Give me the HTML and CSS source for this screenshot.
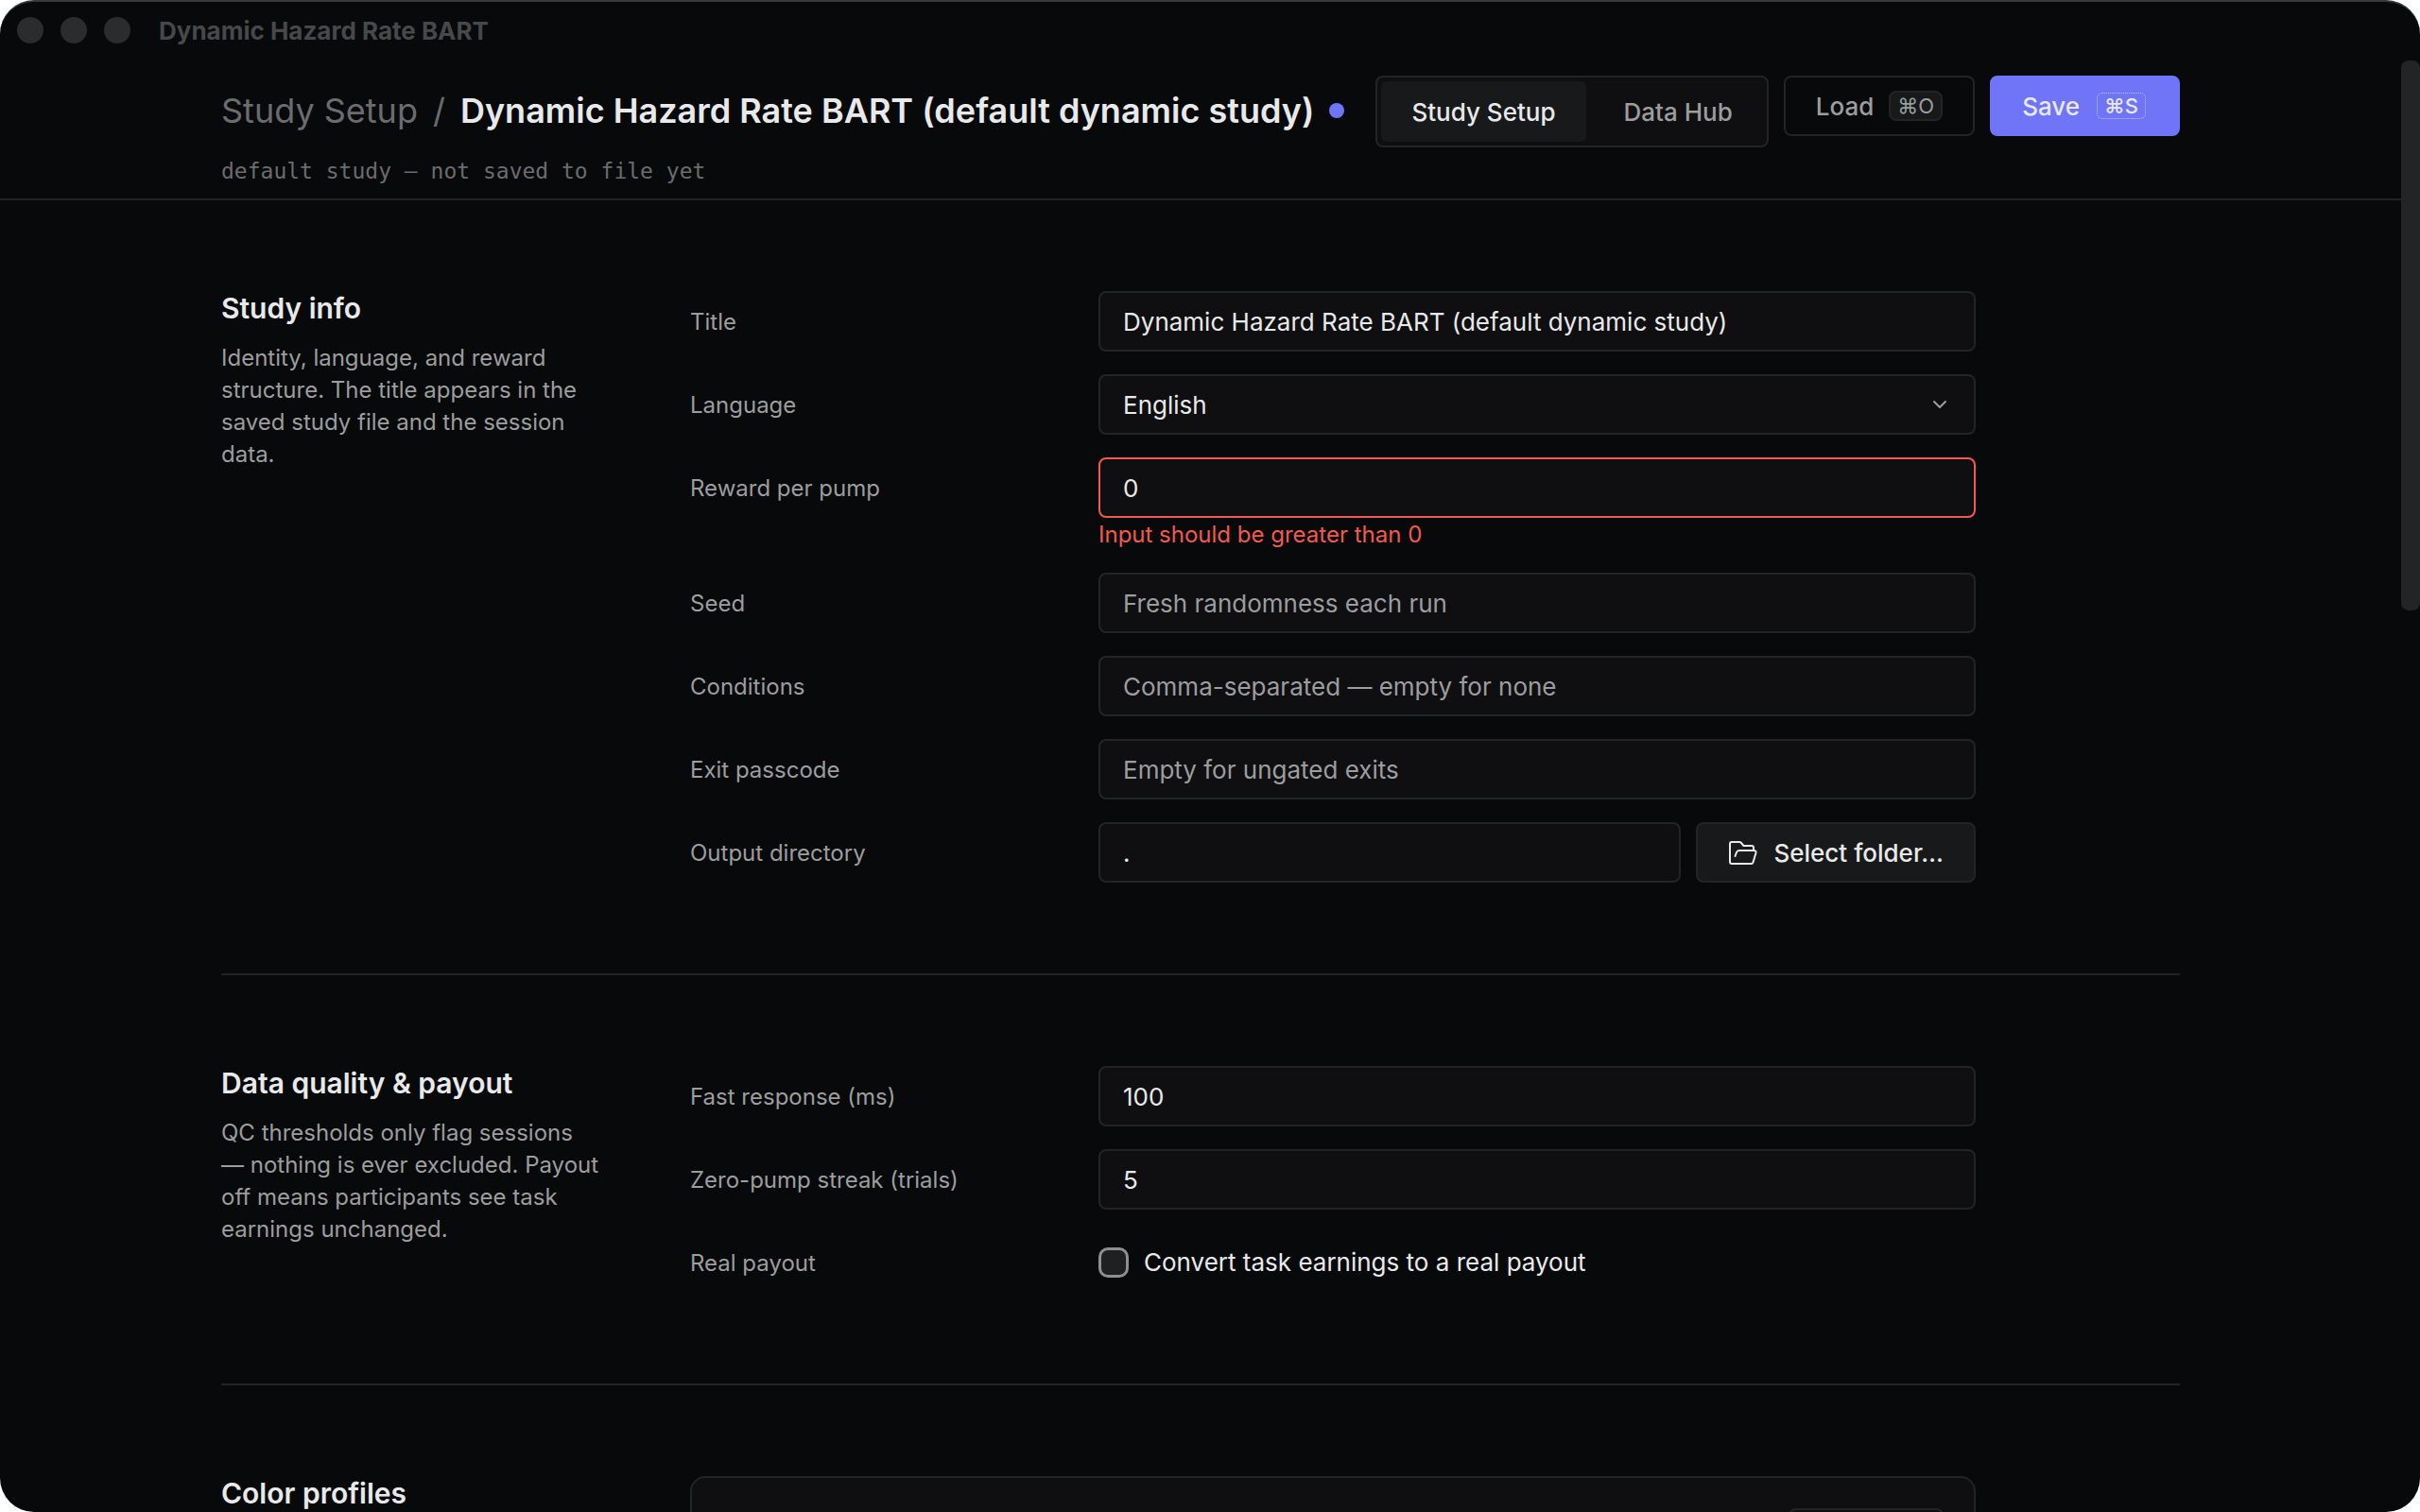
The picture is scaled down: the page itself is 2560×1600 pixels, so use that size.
FILE: index.html
```html
<!DOCTYPE html>
<html lang="en">
<head>
  <meta charset="UTF-8">
  <meta name="viewport" content="width=device-width, initial-scale=1.0">
  <title>Dynamic Hazard Rate BART</title>
  <link rel="stylesheet" href="styles.css">
</head>
<body>
  <div class="window">
    <div class="titlebar">
      <span class="light"></span>
      <span class="light"></span>
      <span class="light"></span>
      <span class="titlebar-text">Dynamic Hazard Rate BART</span>
    </div>

    <div class="viewport">
      <header class="topbar">
        <div class="container topbar-inner">
          <div class="heading">
            <div class="crumbs">
              <span class="crumb">Study Setup</span>
              <span class="crumb">/</span>
              <h1>Dynamic Hazard Rate BART (default dynamic study)</h1>
              <span class="dirty-dot"></span>
            </div>
            <p class="file-path">default study — not saved to file yet</p>
          </div>
          <div class="actions">
            <nav class="tabs">
              <button type="button" class="tab active">Study Setup</button>
              <button type="button" class="tab">Data Hub</button>
            </nav>
            <button type="button" class="btn btn-ghost">Load <kbd>⌘O</kbd></button>
            <button type="button" class="btn btn-primary">Save <kbd>⌘S</kbd></button>
          </div>
        </div>
      </header>

      <main class="container">
        <!-- Study info -->
        <section class="section">
          <div class="intro">
            <h2>Study info</h2>
            <p>Identity, language, and reward structure. The title appears in the saved study file and the session data.</p>
          </div>
          <div class="fields">
            <div class="row">
              <label for="title">Title</label>
              <input type="text" class="control" id="title" value="Dynamic Hazard Rate BART (default dynamic study)">
            </div>
            <div class="row">
              <label for="language">Language</label>
              <div class="select">
                <select class="control" id="language">
                  <option>English</option>
                </select>
                <svg class="chevron" viewBox="0 0 16 16" fill="none" stroke="currentColor" stroke-width="2" stroke-linecap="round" stroke-linejoin="round"><path d="M2 5l6 6 6-6"/></svg>
              </div>
            </div>
            <div class="row">
              <label for="reward">Reward per pump</label>
              <div class="stack">
                <input type="text" class="control invalid" id="reward" value="0">
                <p class="error">Input should be greater than 0</p>
              </div>
            </div>
            <div class="row">
              <label for="seed">Seed</label>
              <input type="text" class="control" id="seed" placeholder="Fresh randomness each run">
            </div>
            <div class="row">
              <label for="conditions">Conditions</label>
              <input type="text" class="control" id="conditions" placeholder="Comma-separated — empty for none">
            </div>
            <div class="row">
              <label for="passcode">Exit passcode</label>
              <input type="text" class="control" id="passcode" placeholder="Empty for ungated exits">
            </div>
            <div class="row">
              <label for="output">Output directory</label>
              <div class="picker">
                <input type="text" class="control" id="output" value=".">
                <button type="button" class="btn btn-secondary">
                  <svg class="folder" viewBox="0 0 32 32" fill="none" stroke="currentColor" stroke-width="2" stroke-linecap="round" stroke-linejoin="round">
                    <path d="M27 13v-2a2 2 0 0 0-2-2h-8.500L13.500 5.500A2 2 0 0 0 12 5H4a2 2 0 0 0-2 2v19a2 2 0 0 0 2 2h20.500a2 2 0 0 0 2-1.500l3-10a2 2 0 0 0-2-2.500H12a3 3 0 0 0-3 2l-1.500 4"/>
                  </svg>
                  Select folder…
                </button>
              </div>
            </div>
          </div>
        </section>

        <!-- Data quality -->
        <section class="section">
          <div class="intro">
            <h2>Data quality &amp; payout</h2>
            <p>QC thresholds only flag sessions — nothing is ever excluded. Payout off means participants see task earnings unchanged.</p>
          </div>
          <div class="fields">
            <div class="row">
              <label for="fast">Fast response (ms)</label>
              <input type="text" class="control" id="fast" value="100">
            </div>
            <div class="row">
              <label for="streak">Zero-pump streak (trials)</label>
              <input type="text" class="control" id="streak" value="5">
            </div>
            <div class="row">
              <span class="row-label">Real payout</span>
              <label class="check"><input type="checkbox"> Convert task earnings to a real payout</label>
            </div>
          </div>
        </section>

        <!-- Color profiles -->
        <section class="section">
          <div class="intro">
            <h2>Color profiles</h2>
          </div>
          <div class="fields">
            <div class="card">
              <button type="button" class="btn btn-ghost card-btn"></button>
            </div>
          </div>
        </section>
      </main>
      <div class="scroll-thumb"></div>
    </div>
  </div>
</body>
</html>
```
FILE: styles.css
```css
:root {
  --bg: #08090a;
  --surface: #0f0f11;
  --raised: #18191a;
  --line: #232426;
  --text: #e8e9ea;
  --muted: #9c9d9f;
  --faint: #6b6c6e;
  --accent: #7075f7;
  --danger: #f25a50;
}

* { box-sizing: border-box; }
body { margin: 0; background: #fff; color: var(--text); font-family: Inter, "Noto Sans", sans-serif; font-size: 26px; }
h1, h2, p { margin: 0; }
button, input, select { font: inherit; color: inherit; }

.window { height: 100vh; display: flex; flex-direction: column; background: var(--bg); border-top: 2px solid #38393b; border-radius: 36px; overflow: hidden; }
.titlebar { height: 62px; flex: none; display: flex; align-items: center; gap: 18px; padding: 0 18px 2px; }
.light { width: 28px; height: 28px; border-radius: 50%; background: #2b2c2e; }
.titlebar-text { margin-left: 12px; font-weight: 700; color: #47484a; }

.viewport { flex: 1; min-height: 0; position: relative; overflow: hidden; padding-right: 20px; }
.scroll-thumb { position: absolute; top: 0; right: 0; width: 20px; height: 582px; border-radius: 8px; background: #232426; }
.container { max-width: 2072px; margin: 0 auto; }

.topbar { border-bottom: 2px solid var(--line); padding: 16px 0 13px; }
.topbar-inner { display: flex; justify-content: space-between; align-items: flex-start; gap: 16px; }
.heading { padding-top: 13px; white-space: nowrap; }
.crumbs { display: flex; align-items: center; gap: 16px; font-size: 36px; line-height: 48px; color: var(--faint); }
.crumbs h1 { font-size: 36px; font-weight: 600; color: var(--text); }
.dirty-dot { width: 16px; height: 16px; border-radius: 50%; background: var(--accent); }
.file-path { margin-top: 24px; font: 23px/32px "DejaVu Sans Mono", monospace; color: var(--faint); }

.actions { display: flex; align-items: flex-start; gap: 16px; }
.tabs { display: flex; gap: 8px; padding: 4px; border: 2px solid var(--line); border-radius: 8px; background: var(--surface); }
.tab { height: 64px; padding: 0 32px; border: 0; border-radius: 6px; background: none; color: var(--muted); font-weight: 500; }
.tab.active { background: var(--raised); color: var(--text); }

.btn { height: 64px; display: flex; align-items: center; gap: 16px; padding: 0 32px; border: 2px solid var(--line); border-radius: 8px; font-weight: 500; white-space: nowrap; }
.btn-ghost { background: none; color: var(--muted); }
.btn-primary { background: var(--accent); border-color: var(--accent); color: var(--text); }
.btn-secondary { background: var(--raised); }
kbd { height: 32px; padding: 0 7px; border: 2px solid var(--line); border-radius: 8px; background: var(--raised); font: 22px/28px Inter, "DejaVu Sans", sans-serif; }
.btn-primary kbd { padding: 0 8px; background: none; border-color: transparent; outline: 1px dotted #c3c3e4; outline-offset: -3px; font-weight: 500; }
.folder { width: 32px; height: 32px; }

.section { display: grid; grid-template-columns: 400px minmax(0, 1360px); column-gap: 96px; padding: 96px 0; border-bottom: 2px solid var(--line); }
.intro h2 { font-size: 30px; line-height: 36px; font-weight: 600; }
.intro p { margin-top: 18px; font-size: 24px; line-height: 34px; color: var(--muted); }

.fields { display: flex; flex-direction: column; gap: 24px; }
.row { display: grid; grid-template-columns: 400px 1fr; column-gap: 32px; }
.row > label, .row-label { padding-top: 2px; font-size: 24px; line-height: 62px; color: var(--muted); }
.control { width: 100%; height: 64px; padding: 0 24px; border: 2px solid var(--line); border-radius: 8px; background: var(--surface); outline: none; }
.control::placeholder { color: var(--muted); opacity: 1; }
.control.invalid { border-color: var(--danger); }
.error { padding-top: 2px; font-size: 24px; line-height: 32px; color: var(--danger); }

.select { position: relative; }
.select select { appearance: none; }
.chevron { position: absolute; top: 24px; right: 30px; width: 16px; height: 16px; color: var(--muted); }

.picker { display: flex; gap: 16px; }
.picker .control { flex: 1; min-width: 0; }
.row > .check { display: flex; align-items: center; gap: 16px; padding: 0; font-size: 26px; line-height: 64px; color: var(--text); }
.check input { appearance: none; width: 32px; height: 32px; margin: 0; border: 3px solid #8e8f91; border-radius: 10px; background: #1f2022; }

.card { min-height: 200px; padding: 32px; border: 2px solid var(--line); border-radius: 16px; background: var(--surface); }
.card-btn { width: 164px; margin-left: auto; }
```
